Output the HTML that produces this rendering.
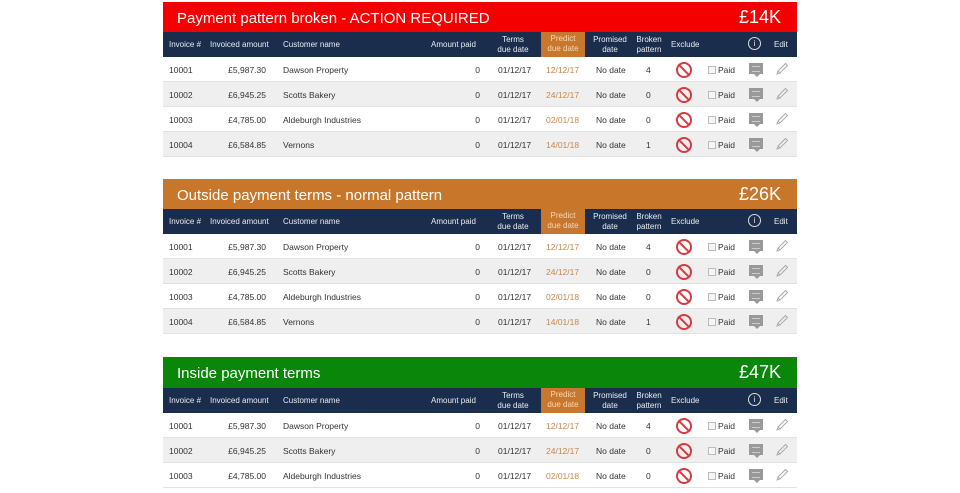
<!DOCTYPE html>
<html><head><meta charset="utf-8"><style>
html,body{margin:0;width:960px;height:493px;background:#fff;position:relative;overflow:hidden;font-family:"Liberation Sans",sans-serif}
.sec{position:absolute;left:163px;width:634px}
.t{height:31px;position:relative;color:#fff;font-size:15px}
.t .a{position:absolute;left:14px;top:8px}
.t .b{position:absolute;right:16px;top:5px;font-size:18px}
.h{height:25px;background:#1b2d4c;position:relative;color:#e8ecf2;font-size:8px}
.h span{position:absolute;line-height:10px;text-align:center}
.h .pr{left:378px;width:44px;top:0;height:25px;background:#c8772e;color:#f5d9b5;padding-top:2px;box-sizing:border-box}
.r{height:25px;position:relative;font-size:8.5px;color:#333;border-bottom:1px solid #e2e2e2;box-sizing:border-box;background:#fff}
.r:nth-child(even){background:#efefef}
.r span{position:absolute;top:8px}
.inv{left:6px}.amt{right:531px}.cn{left:120px}.ap{right:317px}.td{left:335px}.pd{left:383px;color:#c8874a}.pm{left:433px}.bp{left:483px}
.ex{left:513px;top:5px!important;width:12px;height:12px;border:2px solid #d83a3f;border-radius:50%}
.ex:after{content:"";position:absolute;left:5px;top:-2px;width:2px;height:16px;background:#d83a3f;transform:rotate(-45deg)}
.cb{left:545px;top:9px!important;width:6px;height:6px;border:1px solid #bbb;background:#f6f6f6}
.pd2{left:555px}
.cm{left:586px;top:6px!important;width:14px;height:11px;background:#999}
.cm:after{content:"";position:absolute;left:5px;top:11px;border:3px solid transparent;border-top-color:#999}
.cm:before{content:"";position:absolute;left:3px;top:3px;width:8px;height:4px;border-top:1px solid #ccc;border-bottom:1px solid #ccc}
.ed{left:612px;top:5px!important;width:14px;height:14px}
</style></head><body>

<svg width="0" height="0" style="position:absolute"><defs><symbol id="p" viewBox="0 0 14 14"><path d="M2 12 L3 9 L10.5 1.5 L12.5 3.5 L5 11 Z M3 9 L5 11" fill="none" stroke="#aaa" stroke-width="1"/></symbol></defs></svg>

<div class="sec" style="top:2px">
<div class="t" style="background:#f40000;height:30px"><span class="a">Payment pattern broken - ACTION REQUIRED</span><span class="b">£14K</span></div>
<div class="h"><span style="left:6px;top:8px">Invoice #</span><span style="left:47px;top:8px">Invoiced amount</span><span style="left:120px;top:8px">Customer name</span><span style="left:268px;top:8px">Amount paid</span><span style="left:330px;top:3px;width:40px">Terms<br>due date</span><span class="pr">Predict<br>due date</span><span style="left:426px;top:3px;width:42px">Promised<br>date</span><span style="left:468px;top:3px;width:36px">Broken<br>pattern</span><span style="left:508px;top:8px">Exclude</span><span style="left:585px;top:5px;width:11px;height:11px;border:1px solid #ddd;border-radius:50%;line-height:11px;font-size:8px">i</span><span style="left:611px;top:8px">Edit</span></div>
<div>
<div class="r"><span class="inv">10001</span><span class="amt">£5,987.30</span><span class="cn">Dawson Property</span><span class="ap">0</span><span class="td">01/12/17</span><span class="pd">12/12/17</span><span class="pm">No date</span><span class="bp">4</span><span class="ex"></span><span class="cb"></span><span class="pd2">Paid</span><span class="cm"></span><svg class="ed" style="position:absolute;left:612px;top:5px"><use href="#p"/></svg></div>
<div class="r"><span class="inv">10002</span><span class="amt">£6,945.25</span><span class="cn">Scotts Bakery</span><span class="ap">0</span><span class="td">01/12/17</span><span class="pd">24/12/17</span><span class="pm">No date</span><span class="bp">0</span><span class="ex"></span><span class="cb"></span><span class="pd2">Paid</span><span class="cm"></span><svg class="ed" style="position:absolute;left:612px;top:5px"><use href="#p"/></svg></div>
<div class="r"><span class="inv">10003</span><span class="amt">£4,785.00</span><span class="cn">Aldeburgh Industries</span><span class="ap">0</span><span class="td">01/12/17</span><span class="pd">02/01/18</span><span class="pm">No date</span><span class="bp">0</span><span class="ex"></span><span class="cb"></span><span class="pd2">Paid</span><span class="cm"></span><svg class="ed" style="position:absolute;left:612px;top:5px"><use href="#p"/></svg></div>
<div class="r"><span class="inv">10004</span><span class="amt">£6,584.85</span><span class="cn">Vernons</span><span class="ap">0</span><span class="td">01/12/17</span><span class="pd">14/01/18</span><span class="pm">No date</span><span class="bp">1</span><span class="ex"></span><span class="cb"></span><span class="pd2">Paid</span><span class="cm"></span><svg class="ed" style="position:absolute;left:612px;top:5px"><use href="#p"/></svg></div>
</div></div>

<div class="sec" style="top:179px">
<div class="t" style="background:#c8772a;height:30px"><span class="a">Outside payment terms - normal pattern</span><span class="b">£26K</span></div>
<div class="h"><span style="left:6px;top:8px">Invoice #</span><span style="left:47px;top:8px">Invoiced amount</span><span style="left:120px;top:8px">Customer name</span><span style="left:268px;top:8px">Amount paid</span><span style="left:330px;top:3px;width:40px">Terms<br>due date</span><span class="pr">Predict<br>due date</span><span style="left:426px;top:3px;width:42px">Promised<br>date</span><span style="left:468px;top:3px;width:36px">Broken<br>pattern</span><span style="left:508px;top:8px">Exclude</span><span style="left:585px;top:5px;width:11px;height:11px;border:1px solid #ddd;border-radius:50%;line-height:11px;font-size:8px">i</span><span style="left:611px;top:8px">Edit</span></div>
<div>
<div class="r"><span class="inv">10001</span><span class="amt">£5,987.30</span><span class="cn">Dawson Property</span><span class="ap">0</span><span class="td">01/12/17</span><span class="pd">12/12/17</span><span class="pm">No date</span><span class="bp">4</span><span class="ex"></span><span class="cb"></span><span class="pd2">Paid</span><span class="cm"></span><svg class="ed" style="position:absolute;left:612px;top:5px"><use href="#p"/></svg></div>
<div class="r"><span class="inv">10002</span><span class="amt">£6,945.25</span><span class="cn">Scotts Bakery</span><span class="ap">0</span><span class="td">01/12/17</span><span class="pd">24/12/17</span><span class="pm">No date</span><span class="bp">0</span><span class="ex"></span><span class="cb"></span><span class="pd2">Paid</span><span class="cm"></span><svg class="ed" style="position:absolute;left:612px;top:5px"><use href="#p"/></svg></div>
<div class="r"><span class="inv">10003</span><span class="amt">£4,785.00</span><span class="cn">Aldeburgh Industries</span><span class="ap">0</span><span class="td">01/12/17</span><span class="pd">02/01/18</span><span class="pm">No date</span><span class="bp">0</span><span class="ex"></span><span class="cb"></span><span class="pd2">Paid</span><span class="cm"></span><svg class="ed" style="position:absolute;left:612px;top:5px"><use href="#p"/></svg></div>
<div class="r"><span class="inv">10004</span><span class="amt">£6,584.85</span><span class="cn">Vernons</span><span class="ap">0</span><span class="td">01/12/17</span><span class="pd">14/01/18</span><span class="pm">No date</span><span class="bp">1</span><span class="ex"></span><span class="cb"></span><span class="pd2">Paid</span><span class="cm"></span><svg class="ed" style="position:absolute;left:612px;top:5px"><use href="#p"/></svg></div>
</div></div>

<div class="sec" style="top:357px">
<div class="t" style="background:#0a860a"><span class="a">Inside payment terms</span><span class="b">£47K</span></div>
<div class="h"><span style="left:6px;top:8px">Invoice #</span><span style="left:47px;top:8px">Invoiced amount</span><span style="left:120px;top:8px">Customer name</span><span style="left:268px;top:8px">Amount paid</span><span style="left:330px;top:3px;width:40px">Terms<br>due date</span><span class="pr">Predict<br>due date</span><span style="left:426px;top:3px;width:42px">Promised<br>date</span><span style="left:468px;top:3px;width:36px">Broken<br>pattern</span><span style="left:508px;top:8px">Exclude</span><span style="left:585px;top:5px;width:11px;height:11px;border:1px solid #ddd;border-radius:50%;line-height:11px;font-size:8px">i</span><span style="left:611px;top:8px">Edit</span></div>
<div>
<div class="r"><span class="inv">10001</span><span class="amt">£5,987.30</span><span class="cn">Dawson Property</span><span class="ap">0</span><span class="td">01/12/17</span><span class="pd">12/12/17</span><span class="pm">No date</span><span class="bp">4</span><span class="ex"></span><span class="cb"></span><span class="pd2">Paid</span><span class="cm"></span><svg class="ed" style="position:absolute;left:612px;top:5px"><use href="#p"/></svg></div>
<div class="r"><span class="inv">10002</span><span class="amt">£6,945.25</span><span class="cn">Scotts Bakery</span><span class="ap">0</span><span class="td">01/12/17</span><span class="pd">24/12/17</span><span class="pm">No date</span><span class="bp">0</span><span class="ex"></span><span class="cb"></span><span class="pd2">Paid</span><span class="cm"></span><svg class="ed" style="position:absolute;left:612px;top:5px"><use href="#p"/></svg></div>
<div class="r"><span class="inv">10003</span><span class="amt">£4,785.00</span><span class="cn">Aldeburgh Industries</span><span class="ap">0</span><span class="td">01/12/17</span><span class="pd">02/01/18</span><span class="pm">No date</span><span class="bp">0</span><span class="ex"></span><span class="cb"></span><span class="pd2">Paid</span><span class="cm"></span><svg class="ed" style="position:absolute;left:612px;top:5px"><use href="#p"/></svg></div>
</div></div>
</body></html>
